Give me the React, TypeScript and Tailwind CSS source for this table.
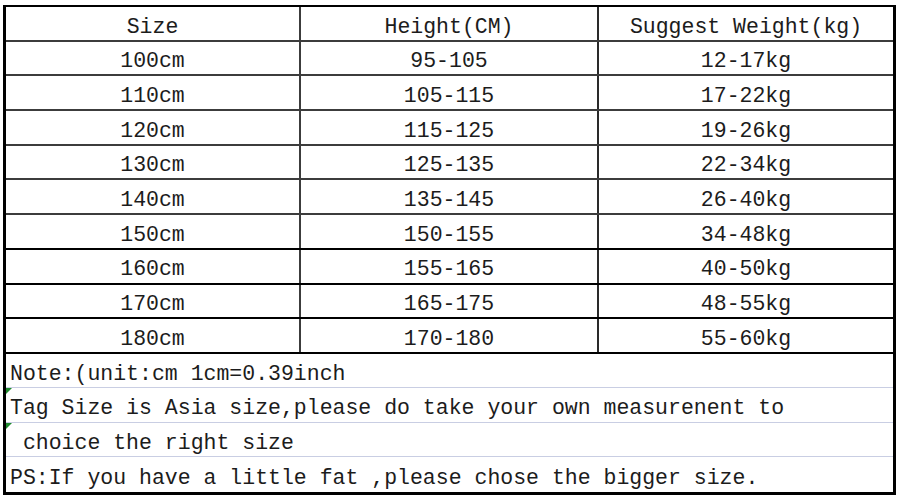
import React from "react";

const rows = [
  ["100cm", "95-105", "12-17kg"],
  ["110cm", "105-115", "17-22kg"],
  ["120cm", "115-125", "19-26kg"],
  ["130cm", "125-135", "22-34kg"],
  ["140cm", "135-145", "26-40kg"],
  ["150cm", "150-155", "34-48kg"],
  ["160cm", "155-165", "40-50kg"],
  ["170cm", "165-175", "48-55kg"],
  ["180cm", "170-180", "55-60kg"],
];

const notes = [
  { text: "Note:(unit:cm 1cm=0.39inch", mark: false },
  { text: "Tag Size is Asia size,please do take your own measurenent to", mark: true },
  { text: " choice the right size", mark: true },
  { text: "PS:If you have a little fat ,please chose the bigger size.", mark: false },
];

const font = { fontFamily: '"Liberation Mono", "DejaVu Sans Mono", monospace' };

export default function App() {
  return (
    <div className="w-[903px] h-[500px] bg-white overflow-hidden pt-[5px] pl-[3px]" style={font}>
      <div className="w-[893px] border-l-[3px] border-r-[3px] border-t-2 border-b-[3px] border-black text-[21.5px] text-[#1c1c1c] leading-none">
        {/* header */}
        <div className="flex h-[34.7px] border-b-2 border-[#3c3c3c]">
          <div className="w-[295px] pt-[8px] border-r-2 border-[#3c3c3c] flex items-center justify-center">Size</div>
          <div className="w-[298px] pt-[8px] border-r-2 border-[#2a2a2a] flex items-center justify-center">Height(CM)</div>
          <div className="flex-1 pt-[8px] flex items-center justify-center">Suggest Weight(kg)</div>
        </div>
        {rows.map((r, i) => (
          <div
            key={r[0]}
            className={
              i >= 5
                ? "flex h-[34.7px] border-b-2 border-black"
                : "flex h-[34.7px] border-b-2 border-[#3c3c3c]"
            }
          >
            <div className="w-[295px] pt-[8px] border-r-2 border-[#3c3c3c] flex items-center justify-center">{r[0]}</div>
            <div className="w-[298px] pt-[8px] border-r-2 border-[#2a2a2a] flex items-center justify-center">{r[1]}</div>
            <div className="flex-1 pt-[8px] flex items-center justify-center">{r[2]}</div>
          </div>
        ))}
        {notes.map((n, i) => (
          <div
            key={i}
            className={
              i < notes.length - 1
                ? "relative flex items-center h-[34.5px] pt-[8px] border-b border-[#c9cee3] pl-[4px] whitespace-pre"
                : "relative flex items-center h-[34.5px] pt-[8px] pl-[4px] whitespace-pre"
            }
          >
            {n.mark && (
              <span className="absolute left-0 top-0 w-0 h-0 border-t-[6px] border-r-[6px] border-t-[#1f8a2e] border-r-transparent" />
            )}
            {n.text}
          </div>
        ))}
      </div>
    </div>
  );
}
